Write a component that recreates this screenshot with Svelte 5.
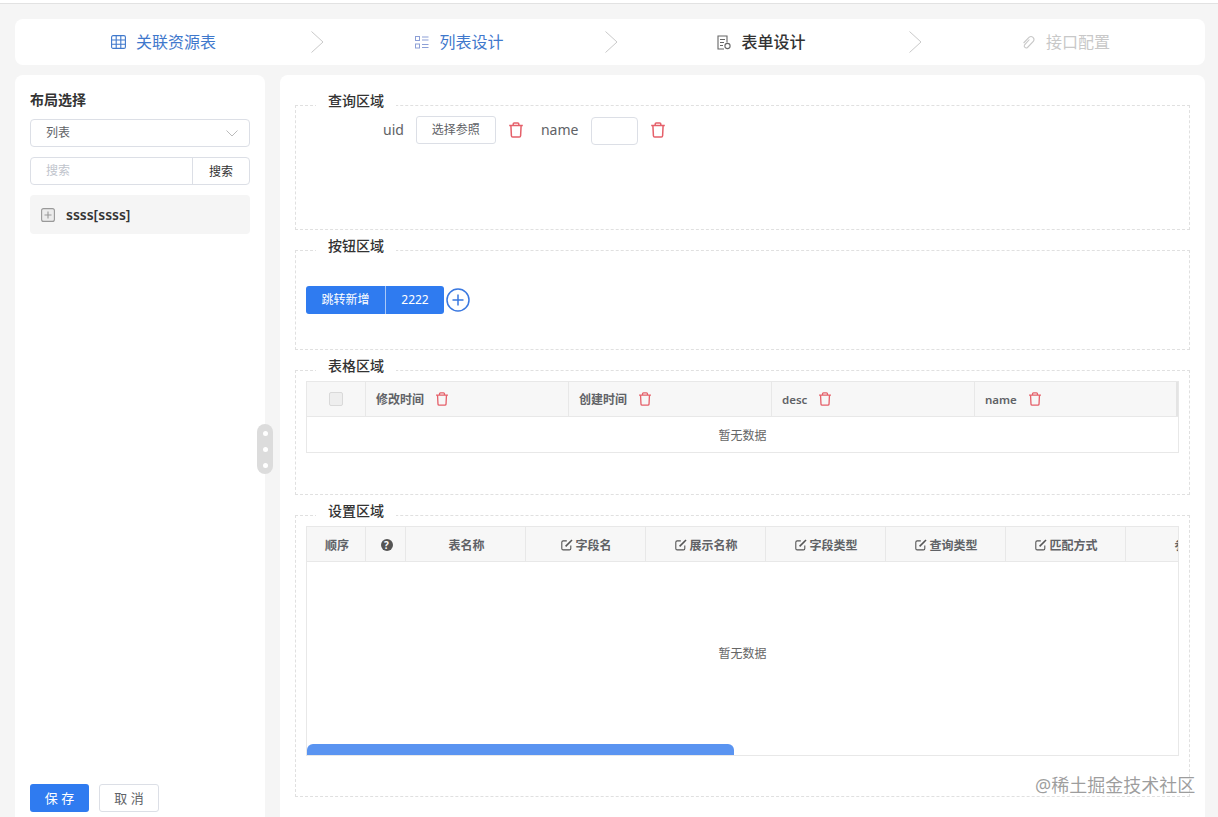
<script>
  const steps = [
    { label: '关联资源表', kind: 'grid', tone: 'done' },
    { label: '列表设计', kind: 'list', tone: 'done' },
    { label: '表单设计', kind: 'form', tone: 'active' },
    { label: '接口配置', kind: 'link', tone: 'todo' }
  ];
  const queryFields = [
    { label: '修改时间' },
    { label: '创建时间' },
    { label: 'desc', latin: true },
    { label: 'name', latin: true }
  ];
  const settingCols = [
    { label: '顺序', w: 59 },
    { label: '?', w: 40, help: true },
    { label: '表名称', w: 120 },
    { label: '字段名', w: 120, edit: true },
    { label: '展示名称', w: 120, edit: true },
    { label: '字段类型', w: 120, edit: true },
    { label: '查询类型', w: 120, edit: true },
    { label: '匹配方式', w: 120, edit: true },
    { label: '参数', w: 120 }
  ];
</script>

{#snippet trash(size)}
  <svg class="trash" width={size} height={size} viewBox="0 0 16 16" fill="none" stroke="currentColor" stroke-width="1.5">
    <path d="M1.2 3.6h13.6M5.2 3.6V2a1 1 0 0 1 1-1h3.6a1 1 0 0 1 1 1v1.6" stroke-linejoin="round" />
    <path d="M2.9 3.6l.5 10.2a1.3 1.3 0 0 0 1.3 1.2h6.6a1.3 1.3 0 0 0 1.3-1.2l.5-10.2" stroke-linejoin="round" />
  </svg>
{/snippet}

{#snippet edit()}
  <svg width="12" height="12" viewBox="0 0 12 12" fill="none" stroke="#555" stroke-width="1.1">
    <path d="M9.8 6.5v3a1.4 1.4 0 0 1-1.4 1.4H2.2A1.4 1.4 0 0 1 .8 9.5V3.3a1.4 1.4 0 0 1 1.4-1.4h3.6" />
    <path d="M4.6 7.4L11 1" stroke-width="1.6" />
  </svg>
{/snippet}

{#snippet stepIcon(kind)}
  {#if kind === 'grid'}
    <svg width="15" height="14" viewBox="0 0 15 14" fill="none" stroke="currentColor" stroke-width="1.1">
      <rect x="0.6" y="0.6" width="13.8" height="12.8" rx="1.5" />
      <path d="M5.2 .6v12.8M9.8 .6v12.8M.6 5h13.8M.6 9.2h13.8" />
    </svg>
  {:else if kind === 'list'}
    <svg width="14" height="13" viewBox="0 0 14 13" fill="none" stroke="#8c9fd6" stroke-width="1">
      <rect x="0.5" y="0.5" width="4" height="4" />
      <rect x="0.5" y="8" width="4" height="4" />
      <path d="M7 1h6.5M7 4h6.5M7 8.5h6.5M7 11.5h6.5" />
    </svg>
  {:else if kind === 'form'}
    <svg width="14" height="15" viewBox="0 0 14 15" fill="none" stroke="#666" stroke-width="1.1">
      <path d="M7 14H1V1h9v6.5" />
      <path d="M3 4.5h5M3 7.5h4M3 10.5h3" />
      <circle cx="10.5" cy="11" r="2.6" />
    </svg>
  {:else}
    <svg width="15" height="15" viewBox="0 0 15 15" fill="none" stroke="currentColor" stroke-width="1.1">
      <path d="M8 3.5L3.2 8.8a2 2 0 0 0 2.9 2.7l6-6.3a3 3 0 0 0-4.3-4L2.2 7" transform="translate(.4 1)" />
    </svg>
  {/if}
{/snippet}

<div class="page">
  <div class="topline"></div>

  <nav class="steps">
    {#each steps as s, i}
      <div class="step step{i} {s.tone}">
        <span class="step-icon">{@render stepIcon(s.kind)}</span>
        <span class="step-label">{s.label}</span>
      </div>
      {#if i < steps.length - 1}
        <svg class="sep" width="13" height="22" viewBox="0 0 13 22" fill="none" stroke="#c9c9c9" stroke-width="1"><path d="M.5 .5L12 11 .5 21.5" /></svg>
      {/if}
    {/each}
  </nav>

  <div class="content">
    <aside class="left">
      <h3>布局选择</h3>
      <div class="select">
        <span class="lift">列表</span>
        <svg width="12" height="7" viewBox="0 0 12 7" fill="none" stroke="#bbb" stroke-width="1"><path d="M.5 .5L6 6l5.5-5.5" /></svg>
      </div>
      <div class="search">
        <span class="ph lift">搜索</span>
        <span class="search-btn">搜索</span>
      </div>
      <div class="tree-item">
        <svg width="14" height="14" viewBox="0 0 14 14" fill="none" stroke="#999" stroke-width="1.1">
          <rect x="0.6" y="0.6" width="12.8" height="12.8" rx="2" fill="#ececec" />
          <path d="M3.5 7h7M7 3.5v7" />
        </svg>
        <span>ssss[ssss]</span>
      </div>
      <div class="actions">
        <button class="primary">保 存</button>
        <button class="plain">取 消</button>
      </div>
    </aside>

    <main class="right">
      <section class="area query">
        <div class="legend">查询区域</div>
        <span class="field-label uid">uid</span>
        <span class="ref-btn">选择参照</span>
        <span class="del">{@render trash(16)}</span>
        <span class="field-label name">name</span>
        <span class="tiny-input"></span>
        <span class="del">{@render trash(16)}</span>
      </section>

      <section class="area buttons">
        <div class="legend">按钮区域</div>
        <div class="btn-group">
          <span class="g1">跳转新增</span>
          <span class="g2">2222</span>
        </div>
        <svg class="add" width="24" height="24" viewBox="0 0 24 24" fill="none" stroke="#3a78e0" stroke-width="1.5">
          <circle cx="12" cy="12" r="11" />
          <path d="M6.5 12h11M12 6.5v11" />
        </svg>
      </section>

      <section class="area tablearea">
        <div class="legend">表格区域</div>
        <div class="table t1">
          <div class="head">
            <div class="cell check"><span class="checkbox"></span></div>
            {#each queryFields as f}
              <div class="cell">
                <span class:latin={f.latin}>{f.label}</span>
                <span class="del">{@render trash(14)}</span>
              </div>
            {/each}
          </div>
          <div class="empty short">暂无数据</div>
        </div>
      </section>

      <section class="area settings">
        <div class="legend">设置区域</div>
        <div class="table t2">
          <div class="head">
            {#each settingCols as c}
              <div class="cell center" style="flex-basis:{c.w}px">
                {#if c.help}
                  <span class="help">?</span>
                {:else}
                  {#if c.edit}{@render edit()}{/if}
                  <span>{c.label}</span>
                {/if}
              </div>
            {/each}
          </div>
          <div class="empty tall">暂无数据</div>
          <div class="scrollbar"></div>
        </div>
      </section>
    </main>
  </div>

  <div class="handle"><i></i><i></i><i></i></div>
  <div class="watermark">@稀土掘金技术社区</div>
</div>

<style>
  :global(body) {
    margin: 0;
    background: #f5f5f5;
  }
  .page {
    position: relative;
    width: 1218px;
    height: 817px;
    overflow: hidden;
    background: #f5f5f5;
    font-family: "Noto Sans", "Noto Sans CJK SC", sans-serif;
    color: #333;
  }
  .topline {
    height: 3px;
    background: #fff;
    border-bottom: 1px solid #e2e2e2;
  }

  .steps {
    display: grid;
    grid-template-columns: 296px 13px 281px 13px 291px 13px 1fr;
    align-items: center;
    height: 46px;
    margin: 15px 13px 0 15px;
    background: #fff;
    border-radius: 8px;
  }
  .step {
    display: flex;
    align-items: center;
    justify-content: center;
    gap: 10px;
    font-size: 16px;
  }
  .step-label { padding-bottom: 2px; }
  .step0 { padding-left: 1px; }
  .step1 { padding-right: 10px; }
  .step2 { padding-right: 4px; }
  .step3 { padding-left: 4px; }
  .step-icon { display: flex; }
  .done { color: #3f78cc; }
  .active { color: #333; font-weight: 500; }
  .todo { color: #c8c8c8; }

  .content {
    display: flex;
    gap: 15px;
    margin: 10px 13px 0 15px;
    height: 742px;
  }
  .left {
    display: flex;
    flex-direction: column;
    box-sizing: border-box;
    width: 250px;
    padding: 15px 15px 5px;
    background: #fff;
    border-radius: 8px 8px 0 0;
  }
  h3 {
    margin: 0 0 9px;
    font-size: 14px;
    line-height: 20px;
    font-weight: 600;
    color: #333;
  }
  .select, .search {
    display: flex;
    align-items: center;
    box-sizing: border-box;
    height: 28px;
    border: 1px solid #dcdfe6;
    border-radius: 4px;
    font-size: 12px;
  }
  .select {
    justify-content: space-between;
    padding: 0 11px 0 15px;
    color: #606266;
  }
  .lift { padding-bottom: 2px; }
  .search { margin-top: 10px; }
  .ph {
    flex: 1;
    padding-left: 15px;
    color: #c0c4cc;
  }
  .search-btn {
    display: flex;
    align-items: center;
    justify-content: center;
    width: 56px;
    height: 100%;
    border-left: 1px solid #dcdfe6;
    color: #333;
  }
  .tree-item {
    display: flex;
    align-items: center;
    gap: 11px;
    height: 39px;
    margin-top: 10px;
    padding-left: 11px;
    background: #f5f5f5;
    border-radius: 4px;
    font-size: 14px;
    font-weight: 600;
    color: #333;
  }
  .actions {
    display: flex;
    gap: 10px;
    margin-top: auto;
  }
  button {
    box-sizing: border-box;
    height: 28px;
    padding: 0 0 2px;
    border-radius: 3px;
    font-family: inherit;
    font-size: 13px;
  }
  .primary {
    width: 59px;
    border: 0;
    background: #2f7bf0;
    color: #fff;
  }
  .plain {
    width: 60px;
    border: 1px solid #dcdfe6;
    background: #fff;
    color: #606266;
  }

  .right {
    flex: 1;
    display: flex;
    flex-direction: column;
    gap: 20px;
    box-sizing: border-box;
    padding: 30px 15px 0;
    background: #fff;
    border-radius: 8px 8px 0 0;
  }
  .area {
    position: relative;
    box-sizing: border-box;
    border: 1px dashed #e0e0e0;
    padding: 10px;
  }
  .legend {
    position: absolute;
    top: -15px;
    left: 20px;
    padding: 0 12px;
    background: linear-gradient(#fff, #fff) no-repeat 0 100% / 100% 8px;
    font-size: 14px;
    line-height: 20px;
    font-weight: 500;
    color: #333;
  }
  .query {
    display: flex;
    align-items: flex-start;
    height: 125px;
    padding: 10px 0 0 87px;
  }
  .field-label {
    font-size: 14px;
    line-height: 28px;
    color: #606266;
  }
  .uid { margin-right: 12px; }
  .ref-btn {
    box-sizing: border-box;
    width: 80px;
    height: 28px;
    border: 1px solid #dcdfe6;
    border-radius: 3px;
    font-size: 12px;
    line-height: 26px;
    text-align: center;
    color: #606266;
  }
  .del {
    display: flex;
    color: #e5606a;
  }
  .query .del {
    margin: 6px 17px 0 12px;
  }
  .query .tiny-input + .del { margin-right: 0; }
  .name { margin-right: 13px; }
  .tiny-input {
    box-sizing: border-box;
    width: 47px;
    height: 28px;
    margin-top: 1px;
    border: 1px solid #dcdfe6;
    border-radius: 4px;
  }
  .buttons {
    display: flex;
    align-items: center;
    gap: 2px;
    height: 100px;
  }
  .btn-group {
    display: flex;
    height: 28px;
    border-radius: 3px;
    overflow: hidden;
    background: #2f7bf0;
    color: #fff;
    font-size: 12px;
    line-height: 28px;
    text-align: center;
  }
  .g1 {
    width: 79px;
    border-right: 1px solid #a9c8f7;
  }
  .g2 { width: 58px; }
  .add { display: block; }

  .tablearea { height: 125px; }
  .settings { height: 282px; }
  .table {
    position: relative;
    box-sizing: border-box;
    width: 873px;
    border: 1px solid #e8e8e8;
    overflow: hidden;
    font-size: 12px;
  }
  .head {
    display: flex;
    height: 34px;
    background: #f7f7f7;
    border-bottom: 1px solid #e8e8e8;
    color: #606266;
    font-weight: 600;
  }
  .cell {
    display: flex;
    flex: 0 0 203px;
    box-sizing: border-box;
    align-items: center;
    gap: 11px;
    padding-left: 10px;
    border-right: 1px solid #e8e8e8;
  }
  .latin { font-size: 11.5px; }
  .t1 .cell.check {
    flex-basis: 59px;
    justify-content: center;
    padding: 0;
  }
  .t1 .cell:nth-child(5) {
    flex-basis: 203px;
    border-right: 2px solid #e4e4e4;
  }
  .checkbox {
    box-sizing: border-box;
    width: 14px;
    height: 14px;
    border: 1px solid #d9d9d9;
    border-radius: 2px;
    background: #eee;
  }
  .cell.center {
    flex-grow: 0;
    flex-shrink: 0;
    justify-content: center;
    gap: 2px;
    padding: 1px 0 0 2px;
  }
  .help {
    display: block;
    width: 12px;
    height: 12px;
    border-radius: 50%;
    background: #555;
    color: #fff;
    font-size: 10px;
    line-height: 12px;
    text-align: center;
    font-weight: 700;
  }
  .empty {
    display: flex;
    align-items: center;
    justify-content: center;
    color: #666;
  }
  .short { height: 35px; }
  .tall {
    height: 182px;
    margin-bottom: 11px;
  }
  .scrollbar {
    position: absolute;
    left: 0;
    bottom: 0;
    width: 427px;
    height: 11px;
    border-radius: 6px 6px 0 0;
    background: #5a94f1;
  }

  .handle {
    position: absolute;
    left: 257px;
    top: 424px;
    display: flex;
    flex-direction: column;
    align-items: center;
    justify-content: space-around;
    box-sizing: border-box;
    width: 16px;
    height: 50px;
    padding: 1px 0;
    border-radius: 8px;
    background: #dcdcdc;
  }
  .handle i {
    width: 5px;
    height: 5px;
    border-radius: 50%;
    background: #fff;
  }
  .watermark {
    position: absolute;
    left: 1035px;
    top: 772px;
    font-size: 18px;
    line-height: 26px;
    color: rgba(120, 120, 120, 0.72);
    white-space: nowrap;
  }
</style>
